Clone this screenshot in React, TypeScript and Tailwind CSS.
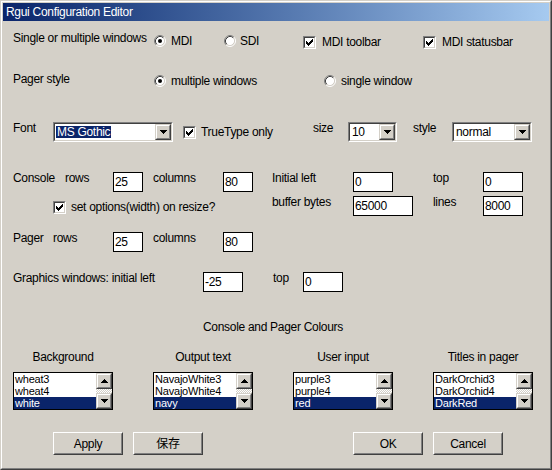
import React from "react";

const CHECK: [number, number][] = [
  [6, 0], [5, 1], [6, 1], [0, 2], [4, 2], [5, 2], [6, 2],
  [0, 3], [1, 3], [3, 3], [4, 3], [5, 3],
  [0, 4], [1, 4], [2, 4], [3, 4], [4, 4],
  [1, 5], [2, 5], [3, 5], [2, 6],
];

function Radio({ on }: { on?: boolean }) {
  return (
    <svg width="12" height="12" viewBox="0 0 12 12" className="shrink-0 block">
      <circle cx="6" cy="6" r="4.5" fill="#fff" />
      <path d="M9.89 2.11A5.5 5.5 0 0 0 2.11 9.89" fill="none" stroke="#808080" />
      <path d="M9.89 2.11A5.5 5.5 0 0 1 2.11 9.89" fill="none" stroke="#fff" />
      <path d="M9.18 2.82A4.5 4.5 0 0 0 2.82 9.18" fill="none" stroke="#404040" />
      <path d="M9.18 2.82A4.5 4.5 0 0 1 2.82 9.18" fill="none" stroke="#d4d0c8" />
      {on && <circle cx="6" cy="6" r="2" fill="#000" />}
    </svg>
  );
}

function Check() {
  return (
    <div className="w-[13px] h-[13px] shrink-0 border border-t-[#808080] border-l-[#808080] border-r-white border-b-white">
      <div className="h-full border border-t-[#404040] border-l-[#404040] border-r-[#d4d0c8] border-b-[#d4d0c8] bg-white p-px">
        <svg width="7" height="7" viewBox="0 0 7 7" className="block" shapeRendering="crispEdges">
          {CHECK.map(([x, y]) => (
            <rect key={`${x}-${y}`} x={x} y={y} width="1" height="1" fill="#000" />
          ))}
        </svg>
      </div>
    </div>
  );
}

function Arrow({ up }: { up?: boolean }) {
  const rows = up ? [3, 2, 1, 0] : [0, 1, 2, 3];
  return (
    <svg width="7" height="4" viewBox="0 0 7 4" className="block" shapeRendering="crispEdges">
      {rows.map((r, i) => (
        <rect key={i} x={r} y={i} width={7 - r * 2} height="1" fill="#000" />
      ))}
    </svg>
  );
}

function ArrowBtn({ up }: { up?: boolean }) {
  return (
    <div className="w-[16px] h-[16px] shrink-0 border border-t-[#d4d0c8] border-l-[#d4d0c8] border-r-[#404040] border-b-[#404040] bg-[#d4d0c8]">
      <div className="h-full border border-t-white border-l-white border-r-[#808080] border-b-[#808080] flex items-center justify-center">
        <Arrow up={up} />
      </div>
    </div>
  );
}

function Combo({ w, value, sel }: { w: string; value: string; sel?: boolean }) {
  return (
    <div className={`${w} h-[20px] shrink-0 border border-t-[#808080] border-l-[#808080] border-r-white border-b-white`}>
      <div className="h-full border border-t-[#404040] border-l-[#404040] border-r-[#d4d0c8] border-b-[#d4d0c8] bg-white flex">
        <div className="flex-1 flex items-center pl-px">
          <span className={sel ? "bg-[#0a246a] text-white px-px leading-[12px]" : "px-px leading-[12px]"}>{value}</span>
        </div>
        <ArrowBtn />
      </div>
    </div>
  );
}

function Edit({ w, value }: { w: string; value: string }) {
  return (
    <div className={`${w} h-[20px] shrink-0 border border-black bg-white flex items-center pl-px`}>{value}</div>
  );
}

function Label({ w, children, className = "" }: { w: string; children: React.ReactNode; className?: string }) {
  return <span className={`${w} shrink-0 mb-[8px] leading-[14px] whitespace-nowrap ${className}`}>{children}</span>;
}

function ListBox({ items }: { items: string[] }) {
  return (
    <div className="w-[100px] h-[38px] border border-black bg-white flex">
      <div className="flex-1 flex flex-col text-[11px] tracking-[-0.2px]">
        {items.map((t, i) => (
          <div key={t} className={`h-[12px] leading-[12px] pl-px ${i === 2 ? "bg-[#0a246a] text-white" : ""}`}>
            {t}
          </div>
        ))}
      </div>
      <div className="w-[16px] flex flex-col">
        <ArrowBtn up />
        <div className="flex-1 bg-[repeating-conic-gradient(#fff_0_25%,#d4d0c8_0_50%)] bg-[length:2px_2px]" />
        <ArrowBtn />
      </div>
    </div>
  );
}

function Button({ children }: { children: React.ReactNode }) {
  return (
    <div className="w-[70px] h-[23px] shrink-0 border border-t-white border-l-white border-r-[#404040] border-b-[#404040]">
      <div className="h-full border border-t-[#d4d0c8] border-l-[#d4d0c8] border-r-[#808080] border-b-[#808080] flex items-center justify-center">
        {children}
      </div>
    </div>
  );
}

const colours = [
  { title: "Background", items: ["wheat3", "wheat4", "white"] },
  { title: "Output text", items: ["NavajoWhite3", "NavajoWhite4", "navy"] },
  { title: "User input", items: ["purple3", "purple4", "red"] },
  { title: "Titles in pager", items: ["DarkOrchid3", "DarkOrchid4", "DarkRed"] },
];

export default function App() {
  return (
    <div className="w-[552px] h-[470px] font-['Liberation_Sans','Noto_Sans_CJK_JP',sans-serif] text-[12px] tracking-[-0.3px] text-black border border-t-[#d4d0c8] border-l-[#d4d0c8] border-r-[#404040] border-b-[#404040]">
      <div className="h-full border border-t-white border-l-white border-r-[#808080] border-b-[#808080] bg-[#d4d0c8] p-px flex flex-col">
        <div className="h-[18px] shrink-0 bg-linear-to-r from-[#0a246a] to-[#a6caf0] text-white pl-[3px] flex items-center leading-none">
          Rgui Configuration Editor
        </div>

        {/* windows */}
        <div className="mt-[10px] h-[20px] flex items-center">
          <Label w="w-[141px]" className="ml-[10px] !mb-[6px]">Single or multiple windows</Label>
          <div className="w-[70px] flex items-center gap-[5px]"><Radio on />MDI</div>
          <div className="w-[79px] flex items-center gap-[4px]"><Radio />SDI</div>
          <div className="w-[120px] mt-[2px] flex items-center gap-[6px]"><Check />MDI toolbar</div>
          <div className="mt-[2px] flex items-center gap-[6px]"><Check />MDI statusbar</div>
        </div>

        {/* pager style */}
        <div className="mt-[20px] h-[20px] flex items-center">
          <Label w="w-[141px]" className="ml-[10px] !mb-[5px]">Pager style</Label>
          <div className="w-[170px] flex items-center gap-[5px]"><Radio on />multiple windows</div>
          <div className="flex items-center gap-[5px]"><Radio />single window</div>
        </div>

        {/* font */}
        <div className="mt-[31px] h-[20px] flex items-center">
          <Label w="w-[40px]" className="ml-[10px]">Font</Label>
          <Combo w="w-[120px]" value="MS Gothic" sel />
          <div className="ml-[10px] w-[130px] flex items-center gap-[5px]"><Check />TrueType only</div>
          <Label w="w-[35px]">size</Label>
          <Combo w="w-[49px]" value="10" />
          <Label w="w-[39px]" className="ml-[16px]">style</Label>
          <Combo w="w-[80px]" value="normal" />
        </div>

        {/* console */}
        <div className="mt-[30px] h-[20px] flex items-center">
          <Label w="w-[52px]" className="ml-[10px]">Console</Label>
          <Label w="w-[48px]">rows</Label>
          <Edit w="w-[30px]" value="25" />
          <Label w="w-[70px]" className="ml-[10px]">columns</Label>
          <Edit w="w-[30px]" value="80" />
          <Label w="w-[81px]" className="ml-[19px]">Initial left</Label>
          <Edit w="w-[40px]" value="0" />
          <Label w="w-[50px]" className="ml-[40px]">top</Label>
          <Edit w="w-[40px]" value="0" />
        </div>
        <div className="mt-[4px] h-[20px] flex items-center">
          <div className="ml-[50px] w-[219px] mt-[2px] flex items-center gap-[5px]"><Check />set options(width) on resize?</div>
          <Label w="w-[81px]">buffer bytes</Label>
          <Edit w="w-[60px]" value="65000" />
          <Label w="w-[50px]" className="ml-[20px]">lines</Label>
          <Edit w="w-[40px]" value="8000" />
        </div>

        {/* pager */}
        <div className="mt-[16px] h-[20px] flex items-center">
          <Label w="w-[40px]" className="ml-[10px]">Pager</Label>
          <Label w="w-[60px]">rows</Label>
          <Edit w="w-[30px]" value="25" />
          <Label w="w-[70px]" className="ml-[10px]">columns</Label>
          <Edit w="w-[30px]" value="80" />
        </div>

        {/* graphics */}
        <div className="mt-[20px] h-[20px] flex items-center">
          <Label w="w-[190px]" className="ml-[10px]">Graphics windows: initial left</Label>
          <Edit w="w-[40px]" value="-25" />
          <Label w="w-[30px]" className="ml-[30px]">top</Label>
          <Edit w="w-[40px]" value="0" />
        </div>

        <div className="mt-[28px] h-[14px] leading-[14px] pl-[200px]">Console and Pager Colours</div>

        <div className="mt-[16px] ml-[10px] flex gap-[40px]">
          {colours.map((c) => (
            <div key={c.title} className="w-[100px] flex flex-col items-center">
              <div className="h-[14px] leading-[14px] whitespace-nowrap">{c.title}</div>
              <div className="mt-[8px]">
                <ListBox items={c.items} />
              </div>
            </div>
          ))}
        </div>

        <div className="mt-[22px] ml-[50px] flex">
          <Button>Apply</Button>
          <div className="ml-[10px]"><Button>保存</Button></div>
          <div className="ml-[150px]"><Button>OK</Button></div>
          <div className="ml-[10px]"><Button>Cancel</Button></div>
        </div>
      </div>
    </div>
  );
}
